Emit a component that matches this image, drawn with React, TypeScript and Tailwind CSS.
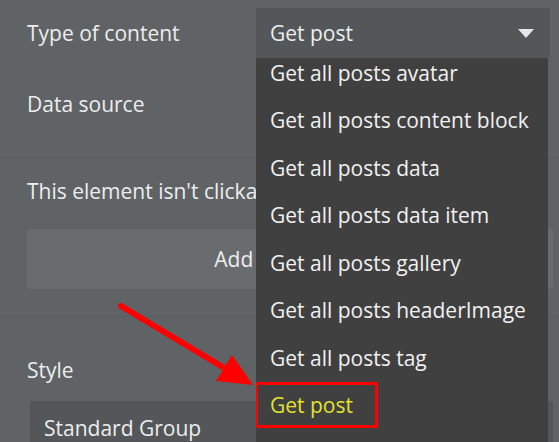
import React from "react";

const items = [
  "Get all posts avatar",
  "Get all posts content block",
  "Get all posts data",
  "Get all posts data item",
  "Get all posts gallery",
  "Get all posts headerImage",
  "Get all posts tag",
];

export default function App() {
  return (
    <div
      className="relative w-[559px] h-[442px] overflow-hidden bg-[#5f6366] text-[#ededed] text-[21px] leading-[30px]"
      style={{ fontFamily: '"Open Sans", "Noto Sans", sans-serif' }}
    >
      {/* Section 1 */}
      <div className="flex flex-col gap-[21px] pt-[8px] pb-[28px] border-b border-[#575b5e]">
        <div className="flex items-center h-[50px]">
          <div className="w-[256px] pl-[27px] shrink-0">Type of content</div>
          <div className="flex items-center justify-between w-[294px] h-[50px] bg-[#53575a] pl-[14px] pr-[16px]">
            <span>Get post</span>
            <svg width="16" height="9" viewBox="0 0 16 9">
              <polygon points="0,0 16,0 8,9" fill="#e4e8ee" />
            </svg>
          </div>
        </div>
        <div className="flex items-center h-[50px]">
          <div className="w-[256px] pl-[27px] shrink-0">Data source</div>
        </div>
      </div>

      {/* Section 2 */}
      <div className="flex flex-col pt-[18px] pb-[27px] px-[27px] border-b border-[#575b5e]">
        <div className="whitespace-nowrap">This element isn't clickable</div>
        <div className="mt-[23px] flex items-center justify-center w-[526px] h-[60px] rounded-[4px] bg-[#686c6f]">
          Add a workflow
        </div>
      </div>

      {/* Section 3 */}
      <div className="flex flex-col pt-[38px] pl-[27px]">
        <div>Style</div>
        <div className="mt-[16px] ml-[3px] w-[523px] h-[60px] bg-[#53575a] pl-[14px] pt-[12px]">
          Standard Group
        </div>
      </div>

      {/* Dropdown */}
      <div className="absolute left-[256px] top-[58px] w-[292px] h-[400px] bg-[#404040] overflow-hidden">
        <div className="flex flex-col -mt-[9px]">
          {items.map((t) => (
            <div key={t} className="flex items-center h-[47.5px] pl-[14px] whitespace-nowrap text-[#f0f0f0]">
              {t}
            </div>
          ))}
          <div className="relative flex items-center h-[47.5px] pl-[14px] text-[#e2e22f]">
            Get post
            <div className="absolute left-[-1px] top-[0px] w-[123px] h-[46px] border-[3px] border-[#ff0000]" />
          </div>
        </div>
      </div>

      {/* Arrow annotation */}
      <svg className="absolute left-0 top-0" width="559" height="442" viewBox="0 0 559 442">
        <line x1="121" y1="306" x2="226" y2="369" stroke="#ff0000" strokeWidth="6" strokeLinecap="round" />
        <polygon points="253,385 216,381 232,355" fill="#ff0000" />
      </svg>
    </div>
  );
}
